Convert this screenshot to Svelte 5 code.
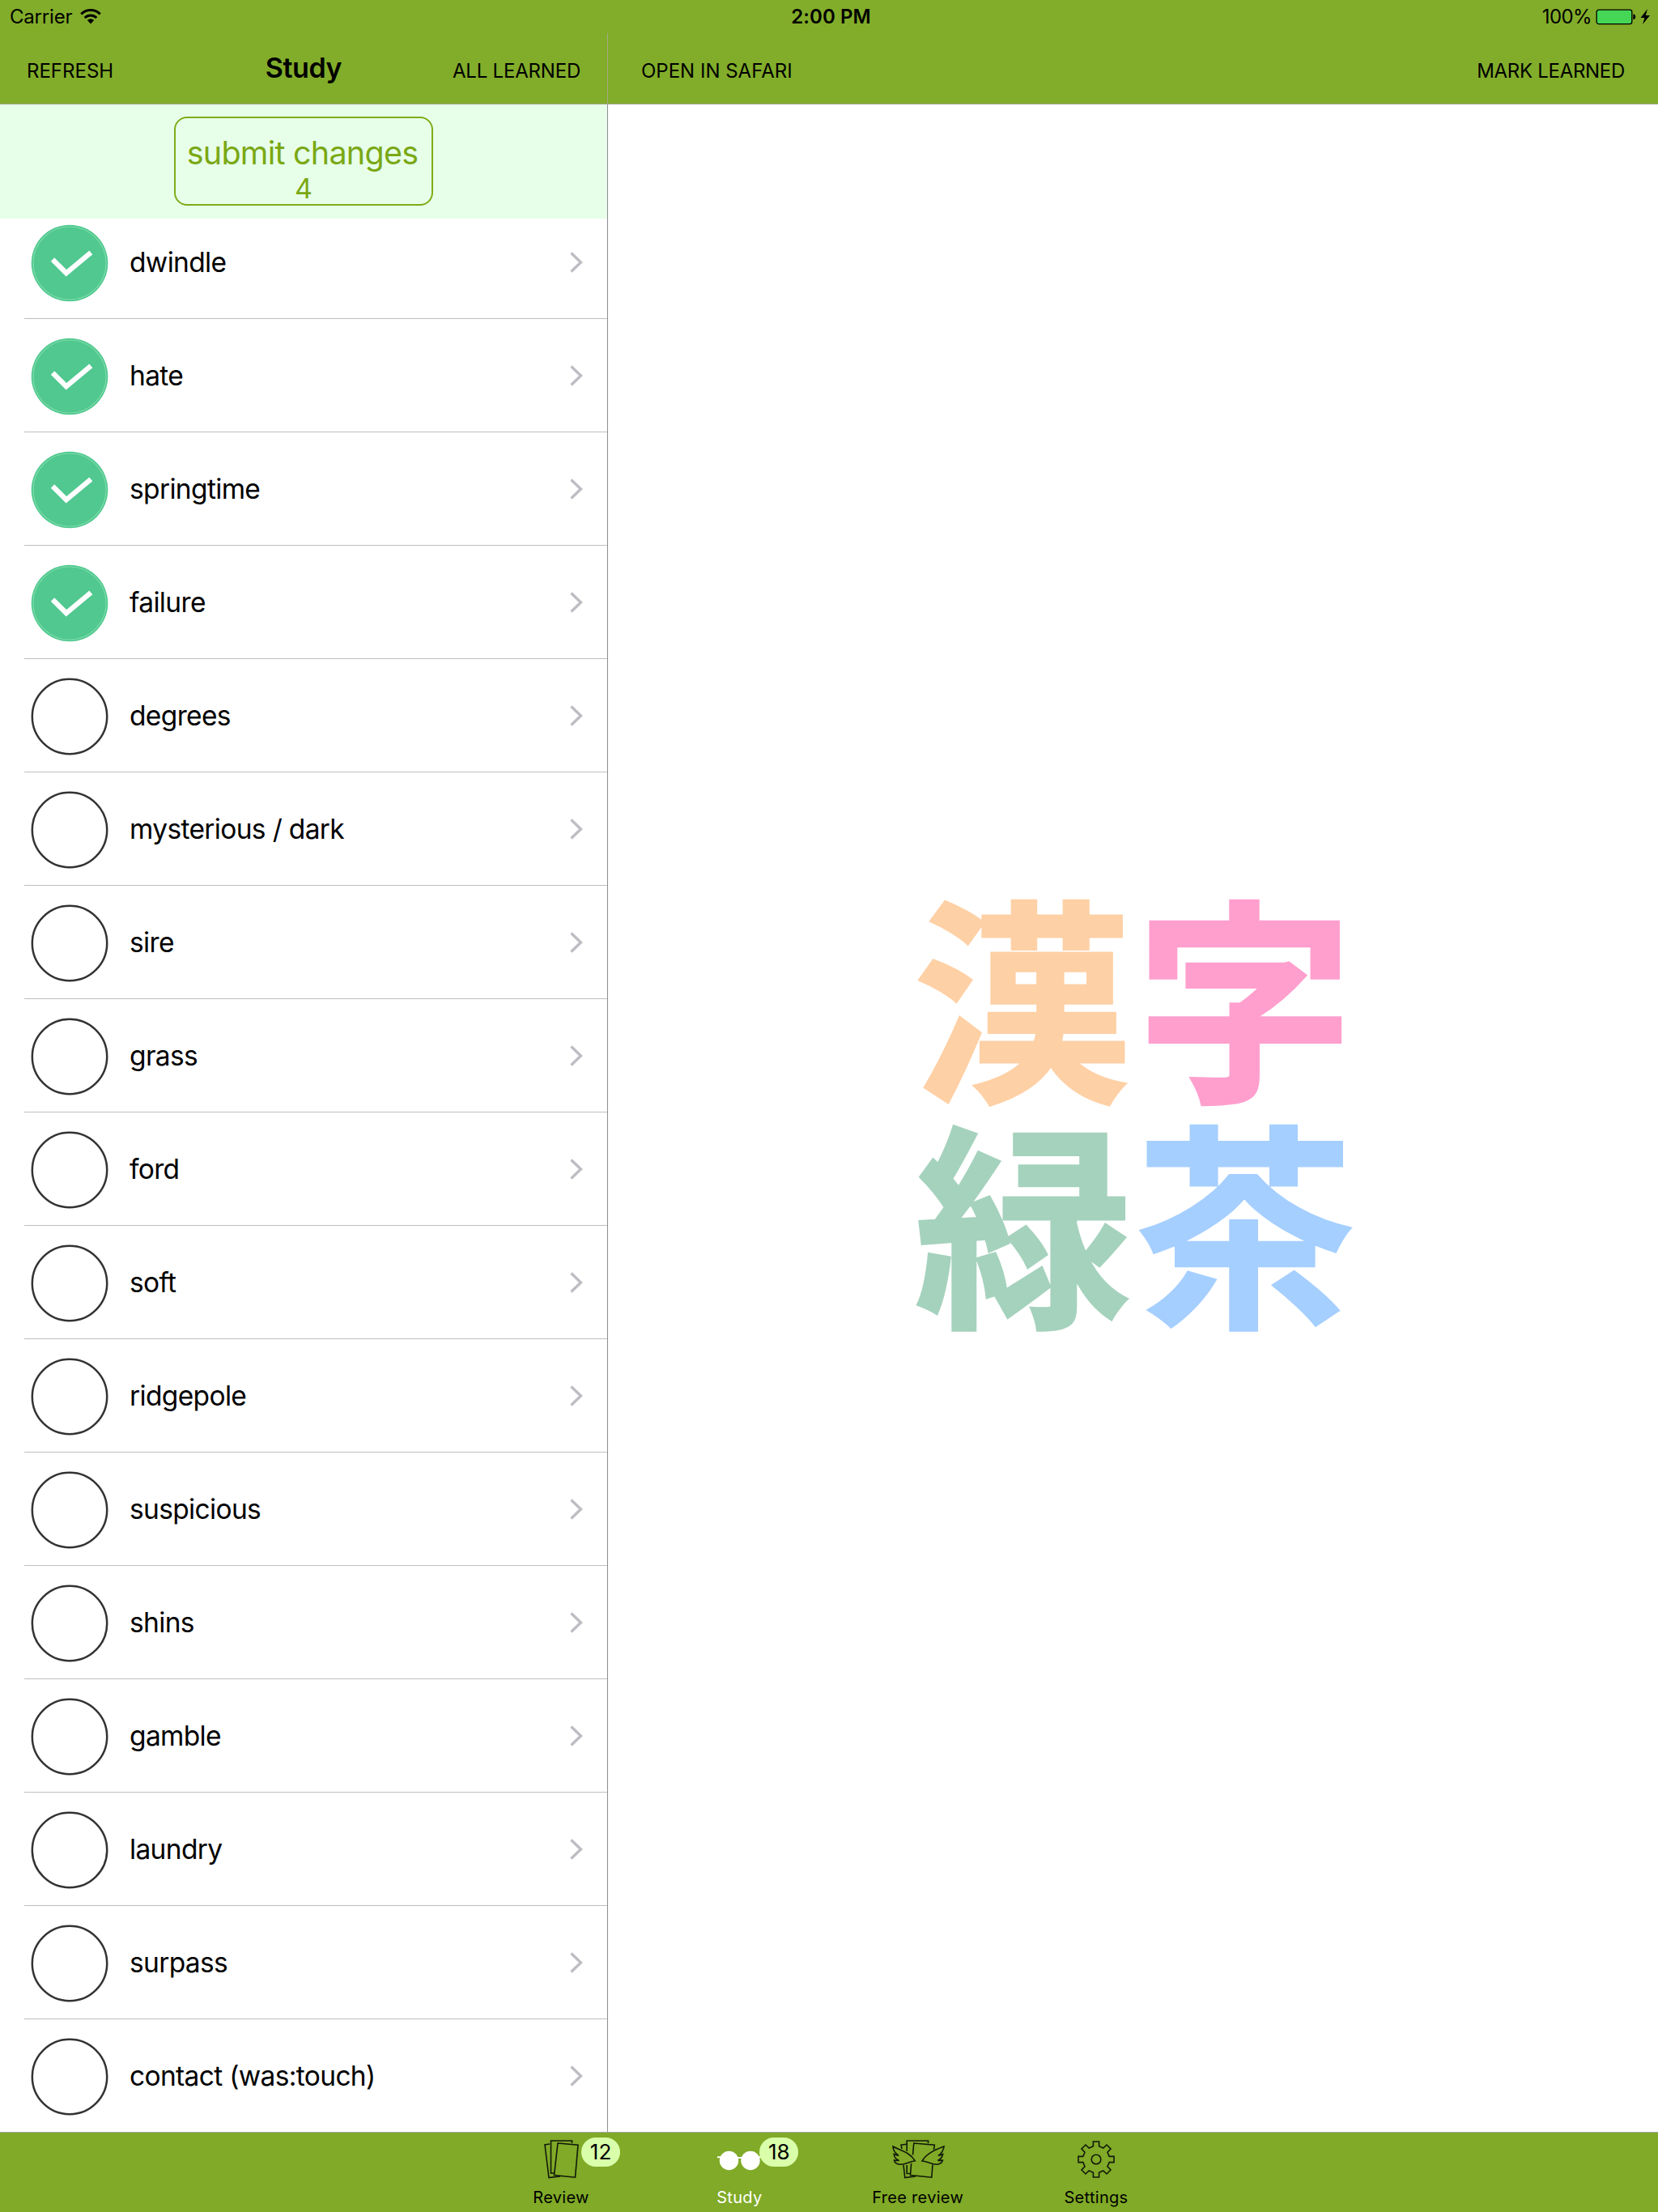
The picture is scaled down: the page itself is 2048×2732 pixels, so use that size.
<script>
  const words = [
    'dwindle', 'hate', 'springtime', 'failure', 'degrees', 'mysterious / dark',
    'sire', 'grass', 'ford', 'soft', 'ridgepole', 'suspicious', 'shins',
    'gamble', 'laundry', 'surpass', 'contact (was:touch)'
  ];
  let learned = $state(words.map((_, i) => i < 4));
  let count = $derived(learned.filter(Boolean).length);

  const logo = [
    { char: '漢', tone: 'orange' },
    { char: '字', tone: 'pink' },
    { char: '緑', tone: 'green' },
    { char: '茶', tone: 'blue' }
  ];

  const tabs = [
    { id: 'review', label: 'Review', badge: 12 },
    { id: 'study', label: 'Study', badge: 18 },
    { id: 'free', label: 'Free review' },
    { id: 'settings', label: 'Settings' }
  ];
</script>

{#snippet cards()}
  <path d="M7 5 L1 6 L6 46.5 L20 45" />
  <path d="M13 41 H8.5 V1 H34.5 V4" />
  <path d="M17 4 L42 6.2 L38.5 46.2 L12.5 43.6 Z" />
{/snippet}

<div class="screen">
  <header>
    <div class="status">
      <div class="carrier">
        <span>Carrier</span>
        <svg class="wifi" viewBox="0 0 26 19">
          <path d="M1.3 6.4 A16.5 16.5 0 0 1 24.7 6.4" />
          <path d="M5.7 11 A10.4 10.4 0 0 1 20.3 11" />
          <path class="dot" d="M13 18.4 L8.8 14 A6 6 0 0 1 17.2 14 Z" />
        </svg>
      </div>
      <span class="time">2:00 PM</span>
      <div class="power">
        <span>100%</span>
        <svg class="battery" viewBox="0 0 68 20">
          <rect x="2.2" y="1.2" width="43.6" height="17.4" rx="2.6" fill="#46d655" stroke="#000" stroke-width="1.3" />
          <path d="M47.3 6.5 h1 q2 1 2 3.2 q0 2.2 -2 3.2 h-1 z" />
          <path d="M65 0 L56.5 11 H61.5 L59 19 L68 8 H62.8 Z" />
        </svg>
      </div>
    </div>
    <nav>
      <div class="nav-left">
        <button class="refresh">REFRESH</button>
        <h1>Study</h1>
        <button class="all">ALL LEARNED</button>
      </div>
      <div class="nav-right">
        <button class="open">OPEN IN SAFARI</button>
        <button class="mark">MARK LEARNED</button>
      </div>
    </nav>
  </header>

  <main>
    <aside>
      <div class="banner">
        <button class="submit">
          <span class="submit-label">submit changes</span>
          <span class="submit-count">{count}</span>
        </button>
      </div>
      <ul>
        {#each words as word, i}
          <li>
            <button class="check" aria-label={word} onclick={() => (learned[i] = !learned[i])}>
              <svg viewBox="0 0 96 96">
                {#if learned[i]}
                  <circle cx="48" cy="48" r="47.3" fill="#50c890" />
                  <circle cx="48" cy="48" r="45" fill="none" stroke="#7bdba6" stroke-width="1.2" />
                  <path d="M27 43.5 L43.8 60.3 L74.3 34.8" fill="none" stroke="#fff" stroke-width="6.3" />
                {:else}
                  <circle cx="48" cy="48" r="46.2" fill="#fff" stroke="#333" stroke-width="2.5" />
                {/if}
              </svg>
            </button>
            <div class="cell">
              <span>{word}</span>
              <svg class="chevron" viewBox="0 0 16 26"><path d="M1.5 1.5 L13.5 13 L1.5 24.5" /></svg>
            </div>
          </li>
        {/each}
      </ul>
    </aside>
    <section>
      <div class="logo">
        {#each logo as { char, tone }}
          <span class={tone}>{char}</span>
        {/each}
      </div>
    </section>
  </main>

  <footer>
    {#each tabs as tab}
      <div class="tab {tab.id}">
        <div class="icon">
          {#if tab.id === 'review'}
            <svg viewBox="0 0 43 48" width="43" height="48">{@render cards()}</svg>
          {:else if tab.id === 'study'}
            <svg class="glasses" viewBox="0 0 54 48" width="54" height="48">
              <circle cx="14.5" cy="25.5" r="11.7" />
              <circle cx="41" cy="25.5" r="11.7" />
              <path d="M0 21.3 H6 M24 22 H31 M48 21.3 H54" />
            </svg>
          {:else if tab.id === 'free'}
            <svg viewBox="0 0 64 48" width="64" height="48">
              <path d="M18 5.2 L11 6.2 L12 11" />
              <path d="M14 31 L15.8 46.5 L29 45" />
              <path d="M18.2 14 V1 H44.5 V4 M18.2 31 V41.5 H22" />
              <path d="M25.5 18.5 L26.8 4 L52.3 6.2 L51.5 12 M50 30.5 L48.8 46.2 L22.5 43.6 L23.6 29" />
              <path d="M1 8 C10 13 22 15 28.3 25.8 C20 27 18 30 11 30.3 C6 30.3 3 28 2.5 25.2 L8.5 25.5 C5 24 2.5 21 2.2 17.5 L8 19.5 C4 16.5 1 13 1 8 Z" />
              <path d="M64 8 C54 12 43 16 37 26 C45 27 48 30 55 30.3 C59 30 61.5 28 62.4 25.2 L56.5 25.5 C60 23.5 62 21 62.6 17.5 L57 19.5 C61 16.5 63.5 13 64 8 Z" />
            </svg>
          {:else}
            <svg viewBox="-23 -24 46 48" width="46" height="48">
              <circle r="5.8" />
              <path d="M-3.6 -22 H3.6 V-16.2 L8.8 -14 L13 -18 L18 -13 L14 -8.8 L16.2 -3.6 H22 V3.6 H16.2 L14 8.8 L18 13 L13 18 L8.8 14 L3.6 16.2 V22 H-3.6 V16.2 L-8.8 14 L-13 18 L-18 13 L-14 8.8 L-16.2 3.6 H-22 V-3.6 H-16.2 L-14 -8.8 L-18 -13 L-13 -18 L-8.8 -14 L-3.6 -16.2 Z" />
            </svg>
          {/if}
          {#if tab.badge}<span class="badge">{tab.badge}</span>{/if}
        </div>
        <span class="label">{tab.label}</span>
      </div>
    {/each}
  </footer>
</div>

<style>
  :global(body) { background: #fff; }
  .screen {
    width: 2048px; height: 2732px; box-sizing: border-box; overflow: hidden;
    display: flex; flex-direction: column;
    font-family: Inter, "Noto Sans CJK JP", sans-serif; color: #000; background: #fff;
  }
  button {
    font: inherit; color: inherit; background: none; border: 0; padding: 0; margin: 0;
    white-space: nowrap;
  }
  header {
    height: 129px; box-sizing: border-box; flex: none;
    background: #82ad2a; border-bottom: 1px solid #a0a590;
    font-size: 24px;
  }
  .status {
    height: 41px; display: grid; grid-template-columns: 1fr auto 1fr; align-items: center;
    padding: 0 10px 0 12px;
  }
  .carrier { display: flex; align-items: center; gap: 10px; letter-spacing: -0.2px; }
  .wifi { width: 26px; height: 19px; }
  .wifi path { fill: none; stroke: #000; stroke-width: 3; }
  .wifi .dot { fill: #000; stroke: none; }
  .time { font-weight: 600; padding-left: 3px; letter-spacing: 0.1px; }
  .power { display: flex; align-items: center; justify-content: flex-end; gap: 4px; letter-spacing: -0.6px; }
  .battery { width: 68px; height: 20px; }
  nav { height: 87px; display: grid; grid-template-columns: 751px 1fr; letter-spacing: -0.15px; }
  .nav-left {
    display: grid; grid-template-columns: 1fr auto 1fr; align-items: center;
    border-right: 1px solid #a3ab88; padding: 6px 33px 0 33px;
  }
  .nav-left .refresh { justify-self: start; }
  .nav-left .all { justify-self: end; letter-spacing: -0.2px; }
  .mark { letter-spacing: -0.3px; }
  h1 { margin: 0; font-size: 34px; font-weight: 600; line-height: 40px; padding-bottom: 7px; letter-spacing: -0.4px; }
  .nav-right { display: flex; justify-content: space-between; align-items: center; padding: 6px 41px 0; }

  main { height: 2504px; flex: none; display: grid; grid-template-columns: 751px 1fr; }
  aside { border-right: 1px solid #8e8e93; box-sizing: border-box; overflow: hidden; }
  .banner {
    height: 141px; box-sizing: border-box; padding-top: 15px; position: relative; z-index: 1;
    display: flex; justify-content: center; align-items: flex-start; background: #e7ffe9;
  }
  .submit {
    width: 320px; height: 110px; box-sizing: border-box; border: 2px solid #7fac18;
    border-radius: 16px; color: #7aa815; display: flex; flex-direction: column;
    align-items: center; padding-top: 19px;
  }
  .submit-label { font-size: 39.5px; line-height: 48px; letter-spacing: -0.75px; margin-right: 3px; }
  .submit-count { font-size: 34px; line-height: 40px; }
  ul { list-style: none; margin: -16px 0 0; padding: 0; }
  li { height: 140px; display: flex; align-items: stretch; padding-left: 30px; }
  .check { width: 112.5px; padding-top: 2px; border-bottom: 1px solid #bebec1; display: flex; align-items: center; justify-content: center; flex: none; }
  .check svg { width: 96px; height: 96px; }
  .cell {
    flex: 1; display: flex; align-items: center; justify-content: space-between;
    border-bottom: 1px solid #bebec1; padding: 0 30px 0 17.5px; font-size: 33.5px; letter-spacing: -0.65px;
  }
  .chevron { width: 16px; height: 26px; }
  .chevron path { fill: none; stroke: #bdbdc3; stroke-width: 3.4; }

  section { display: flex; justify-content: center; padding-top: 957px; }
  .logo {
    display: grid; grid-template-columns: 276px 274px; grid-auto-rows: 278px; height: 556px;
    font-family: "Noto Sans CJK JP", sans-serif; font-weight: 700; font-size: 269px; line-height: 276px;
    text-align: center; -webkit-text-stroke: 3px currentColor;
  }
  .orange { color: #fed0a5; }
  .pink { color: #ff9fce; }
  .green { color: #a5d2bd; padding-left: 4px; }
  .blue { color: #a5cfff; }

  footer {
    flex: 1; display: flex; justify-content: center; background: #80aa27;
    border-top: 1px solid #a0a5a0; padding-right: 1px;
  }
  .tab { width: 220.3px; display: flex; flex-direction: column; align-items: center; padding-top: 9px; }
  .icon { position: relative; height: 48px; display: flex; }
  .icon svg { fill: none; stroke: #10190a; stroke-width: 1.6; overflow: visible; }
  .icon .glasses { fill: #fff; stroke: #fff; stroke-width: 0; }
  .glasses path { stroke-width: 2; }
  .badge {
    position: absolute; left: calc(50% + 25px); top: -3px; width: 48px; height: 36px;
    border-radius: 18px; background: #d9ffaa; font-size: 26px; line-height: 36px; text-align: center;
  }
  .label { font-size: 20px; line-height: 24px; margin-top: 11px; letter-spacing: 0.3px; }
  .study .label { color: #fff; }
</style>
